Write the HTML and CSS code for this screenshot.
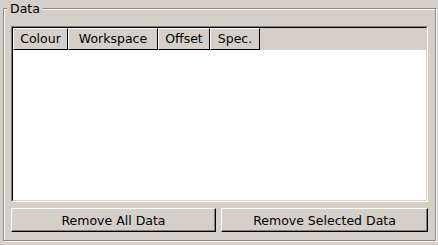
FILE: index.html
```html
<!DOCTYPE html>
<html>
<head>
    <meta charset="utf-8">
    <link rel="stylesheet" href="styles.css">
</head>
<body>
    <div class="group">
        <div class="group-title">Data</div>

        <div class="table-frame">
            <div class="table-inner">
                <div class="table-header">
                    <div class="col col-colour">Colour</div>
                    <div class="col col-workspace">Workspace</div>
                    <div class="col col-offset">Offset</div>
                    <div class="col col-spec">Spec.</div>
                </div>
                <div class="table-body"></div>
            </div>
        </div>

        <div class="actions">
            <button class="btn btn-all">Remove All Data</button>
            <button class="btn btn-selected">Remove Selected Data</button>
        </div>
    </div>
</body>
</html>
```

FILE: styles.css
```css
* {
    margin: 0;
    padding: 0;
    box-sizing: border-box;
}

body {
    width: 438px;
    height: 245px;
    background: #d4d0c8;
    font-family: "DejaVu Sans", sans-serif;
    font-size: 12.5px;
    color: #000;
    padding: 8px 0 0 3px;
    overflow: hidden;
}

.group {
    position: relative;
    width: 433px;
    height: 233px;
    border: 1px solid #8a8884;
    box-shadow: inset 1px 1px 0 #fff, 1px 1px 0 #fff;
    padding: 17px 7px 8px 7px;
    display: flex;
    flex-direction: column;
}

.group-title {
    position: absolute;
    top: -8px;
    left: 3px;
    padding: 0 3px 0 3px;
    background: #d4d0c8;
    line-height: 15px;
}

.table-frame {
    height: 176px;
    border: 1px solid;
    border-color: #808080 #fff #fff #808080;
}

.table-inner {
    height: 100%;
    border: 1px solid;
    border-color: #000 #d4d0c8 #d4d0c8 #000;
    display: flex;
    flex-direction: column;
}

.table-header {
    display: flex;
    height: 22px;
}

.col {
    border: 1px solid;
    border-color: #fff #000 #000 #fff;
    text-align: center;
    line-height: 20px;
}

.col-colour { width: 55px; }
.col-workspace { width: 90px; }
.col-offset { width: 52px; }
.col-spec { width: 50px; }

.table-body {
    flex: 1;
    background: #fff;
}

.actions {
    display: flex;
    gap: 5px;
    margin-top: 6px;
}

.btn {
    height: 24px;
    font-family: "DejaVu Sans", sans-serif;
    font-size: 12.5px;
    color: #000;
    background: #d4d0c8;
    border: 1px solid;
    border-color: #fff #000 #000 #fff;
    box-shadow: inset -1px -1px 0 #808080;
}

.btn-all { width: 205px; }
.btn-selected { width: 207px; }
```
